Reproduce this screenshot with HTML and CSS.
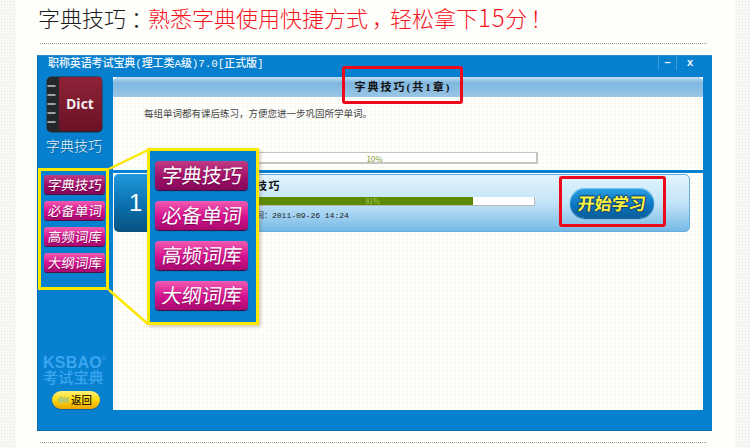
FILE: index.html
```html
<!DOCTYPE html>
<html lang="zh">
<head>
<meta charset="utf-8">
<title>字典技巧</title>
<link rel="stylesheet" href="styles.css">
</head>
<body>
<div class="page">
  <h1 class="headline">字典技巧<span class="colon">：</span><em class="slogan">熟悉字典使用快捷方式<span class="comma">，</span>轻松拿下<span class="digits">15</span>分<span class="bang">！</span></em></h1>
  <div class="window">
    <div class="titlebar">
      <span class="app-name">职称英语考试宝典(理工类A级)7.0[正式版]</span>
      <div class="controls"><span class="ctl ctl-min">–</span><span class="ctl ctl-close">x</span></div>
    </div>
    <aside class="sidebar">
      <svg class="book" viewBox="0 0 57 57" width="57" height="57" aria-hidden="true">
        <defs>
          <linearGradient id="cover" x1="0" y1="0" x2="0" y2="1">
            <stop offset="0" stop-color="#8e2338"/>
            <stop offset="1" stop-color="#6b1226"/>
          </linearGradient>
        </defs>
        <rect x="0.5" y="0.5" width="56" height="56" rx="5" fill="#26282b"/>
        <rect x="13" y="1" width="43" height="54" rx="3" fill="url(#cover)"/>
        <g stroke="#c9cbcc" stroke-width="1.6" stroke-linecap="round">
          <line x1="2" y1="10" x2="9" y2="10"/>
          <line x1="2" y1="19" x2="9" y2="19"/>
          <line x1="2" y1="28" x2="9" y2="28"/>
          <line x1="2" y1="37" x2="9" y2="37"/>
          <line x1="2" y1="46" x2="9" y2="46"/>
        </g>
        <text x="20" y="33" class="book-word">Dict</text>
      </svg>
      <div class="side-label">字典技巧</div>
      <nav class="side-nav">
        <a class="pill pill-active"><span class="slant">字典技巧</span></a>
        <a class="pill"><span class="slant">必备单词</span></a>
        <a class="pill"><span class="slant">高频词库</span></a>
        <a class="pill"><span class="slant">大纲词库</span></a>
      </nav>
      <div class="brand">
        <div class="brand-en">KSBAO<sup class="reg">®</sup></div>
        <div class="brand-cn">考试宝典</div>
      </div>
      <a class="back">
        <svg class="back-arrow" viewBox="0 0 12 10" width="12" height="10" aria-hidden="true"><path d="M0 5 5 0v2.5h7v5H5V10z" fill="#b9c96a"/></svg>
        <span>返回</span>
      </a>
    </aside>
    <main class="panel">
      <div class="panel-head">字典技巧(共1章)</div>
      <p class="hint">每组单词都有课后练习，方便您进一步巩固所学单词。</p>
      <div class="overall"><span class="pct-top">10%</span></div>
      <div class="rule"></div>
      <section class="chapter">
        <div class="num">1</div>
        <div class="chapter-info">
          <div class="chapter-name">字典技巧</div>
          <div class="bar"><div class="bar-fill" style="width:81%"></div><span class="bar-pct">81%</span></div>
          <div class="chapter-date">更新时间：2011-09-26 14:24</div>
        </div>
        <a class="start"><span class="start-text">开始学习</span></a>
      </section>
    </main>
    <svg class="connector" width="180" height="300" viewBox="0 0 180 300" aria-hidden="true">
      <path d="M71 113 110 94M71 234 110 268" stroke="#fde800" stroke-width="2.5" fill="none"/>
    </svg>
    <div class="callout">
      <a class="big big-active"><span class="slant">字典技巧</span></a>
      <a class="big"><span class="slant">必备单词</span></a>
      <a class="big"><span class="slant">高频词库</span></a>
      <a class="big"><span class="slant">大纲词库</span></a>
    </div>
    <div class="mark mark-head"></div>
    <div class="mark mark-start"></div>
  </div>
  <div class="foot-rule"></div>
</div>
</body>
</html>
```

FILE: styles.css
```css
* { box-sizing: border-box; }
html, body { margin: 0; height: 448px; overflow: hidden; }
body {
  background-color: #f8f8f6;
  background-image: radial-gradient(circle, #e6e6e3 0.7px, transparent 0.8px);
  background-size: 3px 3px;
  font-family: "Noto Sans CJK SC", "Liberation Sans", sans-serif;
}
.page {
  width: 719px;
  height: 448px;
  margin-left: 16px;
  background: #fefefb;
  padding-top: 2px;
}
.headline {
  margin: 0 0 0 24px;
  width: 667px;
  height: 42px;
  border-bottom: 1px dotted #9a9a9a;
  font-size: 22px;
  line-height: 30px;
  font-weight: 300;
  color: #1b1b1b;
  text-indent: -2px;
  white-space: nowrap;
}
.colon, .comma, .bang {
  display: inline-block;
  text-indent: 0;
  font-feature-settings: "halt";
}
.colon { width: 22px; padding-left: 5px; }
.comma { width: 22px; padding-left: 4px; }
.bang { width: 18px; padding-left: 3px; }
.digits { font-size: 24px; letter-spacing: 0.8px; line-height: 20px; }
.slogan { font-style: normal; color: #f5141e; }

.window {
  position: relative;
  margin: 11px 0 0 21px;
  width: 675px;
  height: 376px;
  display: grid;
  grid-template-columns: 75px 590px;
  grid-template-rows: 20px 333px;
  background: #0780cf;
  border-left: 1px solid #0b6aab;
  border-bottom: 1px solid #0b6aab;
  border-top: 1px solid #2c8ccc;
}
.titlebar {
  grid-column: 1 / -1;
  display: flex;
  justify-content: space-between;
  padding-left: 10px;
  font-family: "Liberation Mono", "Noto Sans CJK SC", monospace;
  font-size: 11px;
  line-height: 17px;
  color: #f2f8fc;
  font-weight: 500;
}
.app-name { letter-spacing: -0.1px; }
.controls { display: flex; }
.ctl {
  height: 14px;
  text-align: center;
  line-height: 13px;
  font-size: 11px;
  font-weight: 700;
  font-family: "Liberation Sans", sans-serif;
  border-left: 1px solid #3d9ddb;
}
.ctl-min { width: 18px; }
.ctl-close { width: 27px; }
.sidebar {
  grid-row: 2;
  display: flex;
  flex-direction: column;
  height: 355px;
}
.book { display: block; margin-left: 8px; flex: none; }
.book-word {
  font-family: "Open Sans", "Liberation Sans", sans-serif;
  font-size: 14px;
  font-weight: 700;
  fill: #f4eef0;
}
.side-label {
  margin-top: 2px;
  width: 71px;
  text-align: center;
  font-size: 14px;
  line-height: 20px;
  font-weight: 300;
  color: #e6f2fa;
  text-indent: 1px;
  text-shadow: 1px 1px 1px #0a5d96;
}
.side-nav {
  margin-top: 13px;
  width: 71px;
  height: 122px;
  border: 3px solid #fde800;
  padding: 4px 0 0 3px;
  display: flex;
  flex-direction: column;
  gap: 7px;
}
.slant { display: inline-block; transform: skewX(-7deg); text-shadow: 0 1px 1px rgba(80, 0, 50, 0.6); }
.pill {
  display: block;
  width: 61px;
  height: 19px;
  border-radius: 3px;
  background: linear-gradient(#f25cb0, #d5108f 55%, #a80a70);
  box-shadow: 0 1px 0 #4b1340;
  color: #fff;
  font-size: 13.5px;
  line-height: 18px;
  text-align: center;
  font-weight: 400;
  white-space: nowrap;
}
.pill-active { background: linear-gradient(#c23c84, #a01068 55%, #85085a); }
.brand { margin: 65px 0 0 5px; color: #3aa6ef; }
.brand-en {
  font-family: "Liberation Sans", sans-serif;
  font-weight: 700;
  font-size: 16px;
  line-height: 15px;
  letter-spacing: 0.2px;
}
.reg { font-size: 6px; line-height: 0; vertical-align: 8px; font-weight: 400; }
.brand-cn { font-size: 15px; line-height: 14px; font-weight: 500; letter-spacing: 0.2px; }
.back {
  margin: 7px 0 0 14px;
  width: 48px;
  height: 18px;
  border-radius: 9px;
  background: linear-gradient(#fff27a, #ffd90a 50%, #eda400);
  box-shadow: 0 1px 1px #0a5d96;
  display: flex;
  align-items: center;
  gap: 2px;
  padding-left: 5px;
  color: #2a1d00;
  font-size: 10.5px;
  line-height: 18px;
  font-weight: 500;
}
.back-arrow { flex: none; }
.panel {
  grid-row: 2;
  grid-column: 2;
  margin-top: 1px;
  height: 333px;
  background-color: #fefefb;
  background-image: radial-gradient(circle, #f7f7f2 0.7px, transparent 0.8px);
  background-size: 4px 4px;
  display: flex;
  flex-direction: column;
}
.panel-head {
  height: 20px;
  border-radius: 5px 5px 0 0;
  background: linear-gradient(#c4dff2, #7fb7e0 30%, #9ac6e6);
  font-family: "Liberation Serif", "Noto Sans CJK SC", serif;
  font-weight: 700;
  font-size: 11px;
  line-height: 20px;
  letter-spacing: 2px;
  text-align: center;
  padding-right: 10px;
  color: #111;
}
.hint {
  margin: 10px 0 0 31px;
  font-size: 9.5px;
  line-height: 13px;
  color: #444;
  height: 45px;
}
.overall {
  margin: 0 0 0 99px;
  width: 326px;
  height: 12px;
  background: #fff;
  border: 1px solid #c6c6c0;
  border-bottom-width: 2px;
  border-right-width: 2px;
  text-align: center;
  font-size: 8px;
  line-height: 11px;
  color: #7c9b2d;
}
.rule {
  margin-top: 6px;
  height: 3px;
  background: #0780cf;
  flex: none;
}
.chapter {
  margin: 1px 0 0 1px;
  width: 576px;
  height: 58px;
  border: 1px solid #66aedd;
  border-radius: 5px;
  background: linear-gradient(#e2f4fd, #c3e4f8 50%, #76b9e6);
  display: flex;
  flex: none;
}
.num {
  width: 66px;
  margin: -1px 0 -1px -1px;
  border-radius: 5px 0 0 5px;
  background: linear-gradient(#2199dd, #0a6fae 55%, #07527f);
  color: #fff;
  font-family: "Liberation Sans", sans-serif;
  font-size: 24px;
  line-height: 58px;
  text-align: left;
  padding-left: 15px;
  flex: none;
}
.chapter-info { margin-left: 31px; width: 324px; flex: none; }
.chapter-name {
  font-family: "Liberation Serif", "Noto Sans CJK SC", serif;
  font-weight: 700;
  font-size: 11px;
  line-height: 14px;
  margin: 4px 0 0 20px;
  letter-spacing: 1.5px;
  color: #111;
}
.bar {
  position: relative;
  margin-top: 4px;
  height: 9px;
  background: #fff;
  border-bottom: 1px solid #b9b9b4;
  border-right: 1px solid #b9b9b4;
}
.bar-fill { height: 8px; background: #5c8a00; }
.bar-pct {
  position: absolute;
  inset: 0;
  text-align: center;
  font-size: 7px;
  line-height: 8px;
  color: #a8cc60;
}
.chapter-date {
  margin: 3px 0 0 21px;
  font-family: "Liberation Mono", "Noto Sans CJK SC", monospace;
  font-size: 8px;
  line-height: 13px;
  color: #222;
  white-space: nowrap;
}
.start {
  margin: 13px 0 0 35px;
  width: 84px;
  height: 30px;
  border-radius: 15px;
  background: linear-gradient(#2ea1e4, #0c78c2 55%, #0a5d9a);
  box-shadow: inset 0 1px 1px #7cc8f2, 0 1px 1px #0a5d9a;
  text-align: center;
  flex: none;
}
.start-text {
  display: inline-block;
  transform: skewX(-7deg);
  color: #fff23c;
  font-size: 17px;
  line-height: 29px;
  font-weight: 700;
  text-shadow: 0 1px 1px #0a3f70, 1px 0 1px #0a3f70, -1px 0 1px #0a3f70, 0 -1px 1px #0a3f70;
  white-space: nowrap;
}
.connector { position: absolute; left: 0; top: 0; pointer-events: none; }
.callout {
  position: absolute;
  left: 109px;
  top: 92px;
  width: 112px;
  height: 177px;
  background: #0780cf;
  border: 3px solid #fde800;
  box-shadow: 2px 2px 3px rgba(120, 90, 40, 0.3);
  padding: 10px 0 0 5px;
  display: flex;
  flex-direction: column;
  gap: 11px;
}
.big {
  display: block;
  width: 93px;
  height: 29px;
  border-radius: 4px;
  background: linear-gradient(#f25cb0, #d5108f 55%, #a80a70);
  box-shadow: 0 1px 1px #2b1038;
  color: #fff;
  font-size: 20px;
  line-height: 27px;
  text-align: center;
  font-weight: 400;
  white-space: nowrap;
}
.big-active { background: linear-gradient(#c23c84, #a01068 55%, #85085a); }
.mark {
  position: absolute;
  border: 3px solid #ec0a1a;
  border-radius: 3px;
}
.mark-head { left: 304px; top: 10px; width: 121px; height: 38px; }
.mark-start { left: 521px; top: 120px; width: 107px; height: 51px; }
.foot-rule {
  margin: 11px 0 0 24px;
  width: 667px;
  border-top: 1px dotted #9a9a9a;
}
```
